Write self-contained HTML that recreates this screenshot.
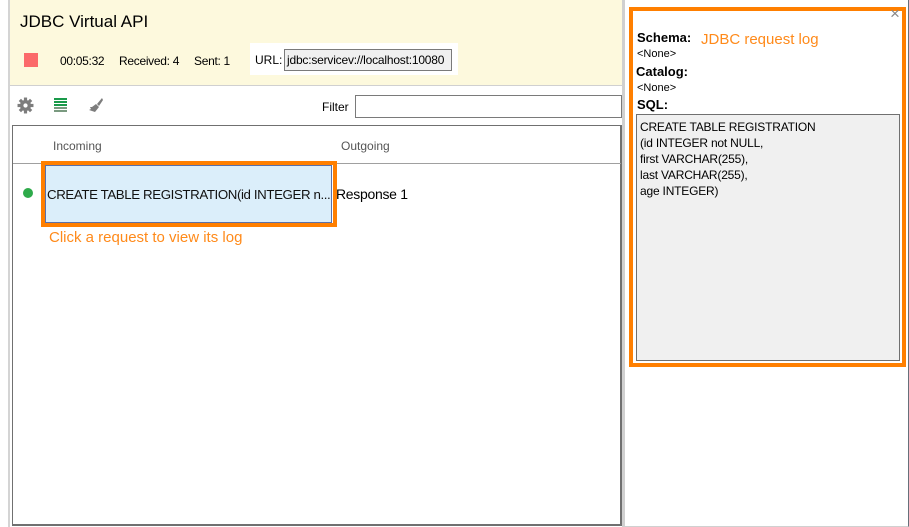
<!DOCTYPE html>
<html><head><meta charset="utf-8"><style>
*{box-sizing:border-box;margin:0;padding:0}
body{width:909px;height:527px;background:#fff;font-family:"Liberation Sans",Tahoma,sans-serif;position:relative;overflow:hidden;font-size:12px;color:#000}
.abs{position:absolute}
</style></head><body>
<div class="abs" style="left:8px;top:0;width:2px;height:527px;background:#d4d4d4"></div>
<div class="abs" style="left:10px;top:0;width:612px;height:86px;background:#fdf9dd;border-bottom:1px solid #d0d0d0"></div>
<div class="abs" style="left:20px;top:12px;font-size:17px">JDBC Virtual API</div>
<div class="abs" style="left:24px;top:53px;width:14px;height:14px;background:#fb6a6a"></div>
<div class="abs" style="left:60px;top:54px;font-size:12px;letter-spacing:-0.3px">00:05:32</div>
<div class="abs" style="left:119px;top:54px;font-size:12px;letter-spacing:-0.3px">Received: 4</div>
<div class="abs" style="left:194px;top:54px;font-size:12px;letter-spacing:-0.3px">Sent: 1</div>
<div class="abs" style="left:250px;top:43px;width:208px;height:32px;background:#fff"></div>
<div class="abs" style="left:255px;top:53px;font-size:12px">URL:</div>
<div class="abs" style="left:284px;top:49px;width:168px;height:22px;background:#f0f0f0;border:1px solid #7a7a7a;font-size:12px;padding:3px 0 0 2px;letter-spacing:-0.2px;white-space:nowrap;overflow:hidden">jdbc:servicev://localhost:10080</div>
<svg class="abs" style="left:17px;top:97px" width="17" height="17" viewBox="0 0 16 16"><g fill="#7d7d7d"><circle cx="8" cy="8" r="5.2"/><rect x="6.5" y="0.5" width="3" height="15"/><rect x="0.5" y="6.5" width="15" height="3"/><rect x="6.5" y="0.5" width="3" height="15" transform="rotate(45 8 8)"/><rect x="6.5" y="0.5" width="3" height="15" transform="rotate(-45 8 8)"/></g><circle cx="8" cy="8" r="2" fill="#fff"/></svg>
<svg class="abs" style="left:54px;top:97px" width="14" height="16"><g fill="#1a9a4a"><rect y="1" width="13" height="2"/><rect y="4" width="13" height="2"/><rect y="7" width="13" height="2"/></g><g fill="#7a9a80"><rect y="10" width="13" height="2"/><rect y="13" width="13" height="2"/></g></svg>
<svg class="abs" style="left:88px;top:97px" width="16" height="16" viewBox="0 0 16 16"><path d="M14 1 L9 7 L11 9 L15 3 Z" fill="#7d7d7d"/><path d="M8 7 L11 10 L7 15 L1 13 L3 12 L2 10 L4 10 Z" fill="#7d7d7d"/></svg>
<div class="abs" style="left:322px;top:100px;font-size:12px">Filter</div>
<div class="abs" style="left:355px;top:95px;width:267px;height:23px;border:1px solid #7a7a7a;background:#fff"></div>
<div class="abs" style="left:12px;top:125px;width:610px;height:401px;border:1px solid #707070;border-right:2px solid #707070;border-bottom:2px solid #707070"></div>
<div class="abs" style="left:13px;top:163px;width:608px;height:1px;background:#a0a0a0"></div>
<div class="abs" style="left:53px;top:139px;color:#555;font-size:12px">Incoming</div>
<div class="abs" style="left:341px;top:139px;color:#555;font-size:12px">Outgoing</div>
<div class="abs" style="left:23px;top:188px;width:10px;height:10px;border-radius:50%;background:#2eaa4a"></div>
<div class="abs" style="left:41px;top:161px;width:296px;height:66px;border:4px solid #ff7f00"></div>
<div class="abs" style="left:45px;top:165px;width:287px;height:58px;background:#dbeefa;border:1px solid #5a70a8"></div>
<div class="abs" style="left:47px;top:187px;font-size:13.3px;color:#111;white-space:nowrap;letter-spacing:-0.4px">CREATE TABLE REGISTRATION(id INTEGER n...</div>
<div class="abs" style="left:336px;top:186px;font-size:14px;letter-spacing:-0.3px">Response 1</div>
<div class="abs" style="left:49px;top:229px;font-size:15px;color:#ff8a1a">Click a request to view its log</div>
<div class="abs" style="left:622px;top:0;width:3px;height:527px;background:#d0d0d0"></div>
<div class="abs" style="left:625px;top:0;width:284px;height:527px;border-right:1px solid #66707a;border-bottom:1px solid #d0d0d0"></div>
<div class="abs" style="left:629px;top:7px;width:277px;height:360px;border:4px solid #ff7f00"></div>
<div class="abs" style="left:890px;top:5px;font-size:17px;color:#888;line-height:17px">×</div>
<div class="abs" style="left:637px;top:30px;font-size:13px;font-weight:bold">Schema:</div>
<div class="abs" style="left:701px;top:31px;font-size:15px;color:#ff8a1a">JDBC request log</div>
<div class="abs" style="left:637px;top:48px;font-size:11px">&lt;None&gt;</div>
<div class="abs" style="left:636px;top:64px;font-size:13px;font-weight:bold">Catalog:</div>
<div class="abs" style="left:637px;top:82px;font-size:11px">&lt;None&gt;</div>
<div class="abs" style="left:637px;top:97px;font-size:13px;font-weight:bold">SQL:</div>
<div class="abs" style="left:636px;top:114px;width:264px;height:247px;background:#f0f0f0;border:1px solid #707070;padding:4px 0 0 3px;font-size:12px;line-height:16px;letter-spacing:-0.2px">CREATE TABLE REGISTRATION<br>(id INTEGER not NULL,<br>first VARCHAR(255),<br>last VARCHAR(255),<br>age INTEGER)</div>
</body></html>
